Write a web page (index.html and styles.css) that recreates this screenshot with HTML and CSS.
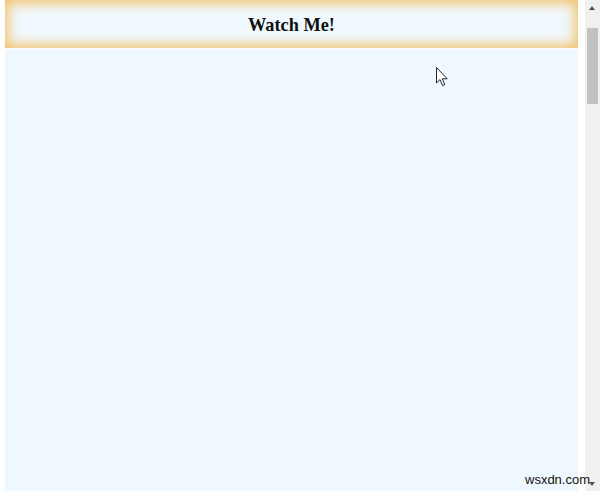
FILE: index.html
```html
<!DOCTYPE html>
<html>
<head>
<meta charset="utf-8">
<link rel="stylesheet" href="styles.css">
</head>
<body>
<div class="screen">
  <div class="edge"></div>
  <main class="page">
    <header class="banner"><h1 class="title">Watch Me!</h1></header>
  </main>
  <div class="gutter"></div>
  <div class="scrollbar">
    <div class="arrow up"></div>
    <div class="thumb"></div>
    <div class="track"></div>
    <div class="arrow down"></div>
  </div>
  <svg class="cursor" width="13" height="20" viewBox="0 0 13 20">
    <path d="M0.5 0.5 L0.5 16 L4 12.6 L6.6 18.6 L8.8 17.6 L6.3 11.8 L11.2 11.8 Z" fill="#fff" stroke="#222" stroke-width="1" stroke-linejoin="miter"/>
  </svg>
  <div class="watermark">wsxdn.com</div>
</div>
</body>
</html>
```
FILE: styles.css
```css
html, body {
  margin: 0;
  padding: 0;
  background: #ffffff;
}
.screen {
  position: relative;
  display: flex;
  width: 600px;
  height: 491px;
  overflow: hidden;
}
.edge {
  width: 5px;
  flex: none;
}
.page {
  width: 573px;
  flex: none;
  background: #f0f8ff;
}
.banner {
  height: 48px;
  box-shadow: inset 0 0 13px 3px #f4c064;
  background: #f0f8ff;
  border-bottom: 2px solid #fafcff;
  display: flex;
  align-items: center;
  justify-content: center;
}
.title {
  margin: 0;
  font-family: "Liberation Serif", "Times New Roman", serif;
  font-weight: bold;
  font-size: 18.3px;
  line-height: 1;
  color: #111;
  padding-top: 3px;
}
.gutter {
  width: 7px;
  flex: none;
}
.scrollbar {
  width: 15px;
  flex: none;
  background: #f0f0f0;
  display: flex;
  flex-direction: column;
  align-items: center;
}
.arrow {
  height: 17px;
  width: 15px;
  flex: none;
  position: relative;
}
.arrow::after {
  content: "";
  position: absolute;
  left: 4px;
  width: 0;
  height: 0;
  border-left: 3.5px solid transparent;
  border-right: 3.5px solid transparent;
}
.arrow.up::after {
  top: 6px;
  border-bottom: 4px solid #505050;
}
.arrow.down::after {
  top: 8px;
  border-top: 4px solid #505050;
}
.thumb {
  width: 11px;
  height: 76px;
  margin-top: 11px;
  background: #c1c1c1;
  flex: none;
}
.track {
  flex: 1;
}
.cursor {
  position: absolute;
  left: 436px;
  top: 67px;
}
.watermark {
  position: absolute;
  left: 525px;
  top: 472px;
  font-family: "Liberation Sans", Arial, sans-serif;
  font-size: 13px;
  line-height: 15px;
  color: #111;
}
```
